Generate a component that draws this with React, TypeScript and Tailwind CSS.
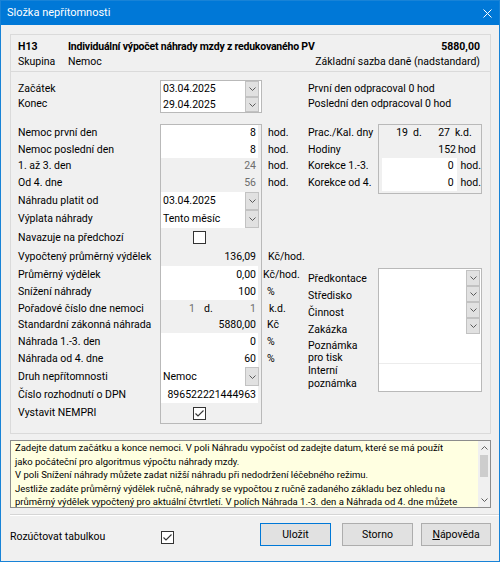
import React from "react";

function Chevron() {
  return (
    <svg width="7" height="4" viewBox="0 0 7 4" className="block">
      <path d="M0.5 0.5 L3.5 3.5 L6.5 0.5" fill="none" stroke="#5a5a5a" strokeWidth="1" />
    </svg>
  );
}

function DropBtn({ h }: { h: string }) {
  return (
    <div className={`w-[14px] ${h} shrink-0 flex items-center justify-center bg-[#e1e1e1] border border-[#c2c2c2]`}>
      <Chevron />
    </div>
  );
}

function Check({ on }: { on?: boolean }) {
  return (
    <div className="w-[13px] h-[13px] shrink-0 border border-[#333333] bg-white flex items-center justify-center">
      {on && (
        <svg width="11" height="11" viewBox="0 0 11 11" className="block">
          <path d="M1.5 5.5 L4 8 L9.5 2.5" fill="none" stroke="#333333" strokeWidth="1.1" />
        </svg>
      )}
    </div>
  );
}

function Num({ v, white, gray }: { v: string; white?: boolean; gray?: boolean }) {
  return (
    <div
      className={`h-full mr-[3px] flex items-center justify-end pr-[2px] ${white ? "bg-white" : ""} ${
        gray ? "text-[#6d6d6d]" : ""
      }`}
    >
      {v}
    </div>
  );
}

function Combo({ v }: { v: string }) {
  return (
    <div className="h-full mr-[2px] flex bg-white">
      <div className="flex-1 pl-[2px] flex items-center">{v}</div>
      <DropBtn h="h-full" />
    </div>
  );
}

const rows = [
  { l: "Nemoc první den", h: "h-[16px]", f: <Num v="8" white />, u: "hod.", up: "pl-[6px]" },
  { l: "Nemoc poslední den", h: "h-[17px]", f: <Num v="8" white />, u: "hod.", up: "pl-[6px]" },
  { l: "1. až 3. den", h: "h-[16px]", f: <Num v="24" gray />, u: "hod.", up: "pl-[6px]" },
  { l: "Od 4. dne", h: "h-[18px]", f: <Num v="56" gray />, u: "hod.", up: "pl-[6px]" },
  { l: "Náhradu platit od", h: "h-[18px]", f: <Combo v="03.04.2025" />, u: "", up: "" },
  { l: "Výplata náhrady", h: "h-[18px]", f: <Combo v="Tento měsíc" />, u: "", up: "" },
  {
    l: "Navazuje na předchozí",
    h: "h-[19px]",
    f: (
      <div className="h-full flex items-center pl-[32px]">
        <Check />
      </div>
    ),
    u: "",
    up: "",
  },
  { l: "Vypočtený průměrný výdělek", h: "h-[19px]", f: <Num v="136,09" />, u: "Kč/hod.", up: "pl-[6px]" },
  { l: "Průměrný výdělek", h: "h-[17px]", f: <Num v="0,00" white />, u: "Kč/hod.", up: "pl-[1px]" },
  { l: "Snížení náhrady", h: "h-[17px]", f: <Num v="100" white />, u: "%", up: "pl-[5px]" },
  {
    l: "Pořadové číslo dne nemoci",
    h: "h-[17px]",
    f: (
      <div className="h-full flex items-center">
        <span className="w-[34px] text-right text-[#6d6d6d]">1</span>
        <span className="pl-[9px]">d.</span>
        <span className="flex-1 text-right pr-[5px] text-[#6d6d6d]">1</span>
      </div>
    ),
    u: "k.d.",
    up: "pl-[7px]",
  },
  { l: "Standardní zákonná náhrada", h: "h-[16px]", f: <Num v="5880,00" />, u: "Kč", up: "pl-[5px]" },
  { l: "Náhrada 1.-3. den", h: "h-[17px]", f: <Num v="0" white />, u: "%", up: "pl-[5px]" },
  { l: "Náhrada od 4. dne", h: "h-[17px]", f: <Num v="60" white />, u: "%", up: "pl-[5px]" },
  { l: "Druh nepřítomnosti", h: "h-[19px]", f: <Combo v="Nemoc" />, u: "", up: "" },
  { l: "Číslo rozhodnutí o DPN", h: "h-[17px]", f: <Num v="896522221444963" white />, u: "", up: "" },
  {
    l: "Vystavit NEMPRI",
    h: "h-[20px]",
    f: (
      <div className="h-full flex items-center pl-[32px]">
        <Check on />
      </div>
    ),
    u: "",
    up: "",
  },
];

const help = [
  "Zadejte datum začátku a konce nemoci. V poli Náhradu vypočíst od zadejte datum, které se má použít",
  "jako počáteční pro algoritmus výpočtu náhrady mzdy.",
  "V poli Snížení náhrady můžete zadat nižší náhradu při nedodržení léčebného režimu.",
  "Jestliže zadáte průměrný výdělek ručně, náhrady se vypočtou z ručně zadaného základu bez ohledu na",
  "průměrný výdělek vypočtený pro aktuální čtvrtletí. V polích Náhrada 1.-3. den a Náhrada od 4. dne můžete",
];

export default function App() {
  return (
    <div className="w-[500px] h-[562px] flex flex-col bg-[#f0f0f0] border border-[#1883d7] text-[10.5px] text-black font-['Roboto',sans-serif] overflow-hidden">
      {/* title bar */}
      <div className="h-[24px] shrink-0 bg-[#0078d7] flex items-center justify-between pl-[6px] pr-[7px] text-white text-[11px]">
        <span>Složka nepřítomnosti</span>
        <svg width="9" height="9" viewBox="0 0 9 9" className="block">
          <path d="M0.5 0.5 L8.5 8.5 M8.5 0.5 L0.5 8.5" stroke="#ffffff" strokeWidth="1" />
        </svg>
      </div>

      <div className="flex flex-col pl-[9px] pr-[8px]">
        {/* header */}
        <div className="mt-[9px] h-[37px] border-x border-t border-[#dadada] pt-[4px] pl-[7px] pr-[10px]">
          <div className="flex h-[15px] items-center font-bold">
            <span className="w-[50px]">H13</span>
            <span className="flex-1 tracking-[-0.2px]">Individuální výpočet náhrady mzdy z redukovaného PV</span>
            <span>5880,00</span>
          </div>
          <div className="flex h-[15px] items-center">
            <span className="w-[50px]">Skupina</span>
            <span className="flex-1">Nemoc</span>
            <span>Základní sazba daně (nadstandard)</span>
          </div>
        </div>

        {/* main group */}
        <div className="h-[363px] border border-[#dadada] pt-[8px] pl-[7px]">
          {/* dates */}
          <div className="flex h-[33px]">
            <div className="w-[142px] pt-[1px]">
              <div className="h-[15px] flex items-center">Začátek</div>
              <div className="h-[15px] flex items-center">Konec</div>
            </div>
            <div className="w-[102px] h-[33px] border border-[#b9b9b9] bg-white flex flex-col">
              <div className="h-[16px] flex">
                <div className="flex-1 pl-[2px] flex items-center">03.04.2025</div>
                <div className="mr-[2px]">
                  <DropBtn h="h-[16px]" />
                </div>
              </div>
              <div className="h-[15px] flex">
                <div className="flex-1 pl-[2px] flex items-center">29.04.2025</div>
                <div className="mr-[2px]">
                  <DropBtn h="h-[15px]" />
                </div>
              </div>
            </div>
            <div className="w-[46px]" />
            <div className="pt-[1px]">
              <div className="h-[15px] flex items-center">První den odpracoval 0 hod</div>
              <div className="h-[15px] flex items-center">Poslední den odpracoval 0 hod</div>
            </div>
          </div>

          {/* big section */}
          <div className="flex mt-[11px]">
            <div className="w-[142px] pt-[1px]">
              {rows.map((r) => (
                <div key={r.l} className={`${r.h} flex items-center whitespace-nowrap`}>
                  {r.l}
                </div>
              ))}
            </div>
            <div className="w-[102px] h-[300px] border border-[#b9b9b9] bg-[#f0f0f0] flex flex-col">
              {rows.map((r) => (
                <div key={r.l} className={`${r.h} shrink-0`}>
                  {r.f}
                </div>
              ))}
            </div>
            <div className="w-[46px] pt-[1px]">
              {rows.map((r) => (
                <div key={r.l} className={`${r.h} flex items-center ${r.up}`}>
                  {r.u}
                </div>
              ))}
            </div>

            {/* right column */}
            <div className="w-[174px] flex flex-col">
              <div className="flex">
                <div className="w-[70px] pt-[1px]">
                  <div className="h-[16px] flex items-center">Prac./Kal. dny</div>
                  <div className="h-[17px] flex items-center">Hodiny</div>
                  <div className="h-[16px] flex items-center">Korekce 1.-3.</div>
                  <div className="h-[18px] flex items-center">Korekce od 4.</div>
                </div>
                <div className="w-[104px] h-[70px] border border-[#b9b9b9] flex flex-col">
                  <div className="h-[16px] flex items-center">
                    <span className="w-[29px] text-right">19</span>
                    <span className="w-[14px] pl-[5px]">d.</span>
                    <span className="w-[28px] text-right">27</span>
                    <span className="pl-[5px]">k.d.</span>
                  </div>
                  <div className="h-[17px] flex items-center">
                    <span className="w-[77px] text-right">152</span>
                    <span className="pl-[2px]">hod</span>
                  </div>
                  <div className="h-[16px] flex items-center">
                    <div className="ml-[3px] w-[75px] h-full bg-white flex items-center justify-end pr-[3px]">0</div>
                    <span className="pl-[4px]">hod.</span>
                  </div>
                  <div className="h-[17px] flex items-center">
                    <div className="ml-[3px] w-[75px] h-full bg-white flex items-center justify-end pr-[3px]">0</div>
                    <span className="pl-[4px]">hod.</span>
                  </div>
                </div>
              </div>

              <div className="flex mt-[74px]">
                <div className="w-[70px] pt-[2px]">
                  <div className="h-[17px] flex items-center">Předkontace</div>
                  <div className="h-[17px] flex items-center">Středisko</div>
                  <div className="h-[17px] flex items-center">Činnost</div>
                  <div className="h-[17px] flex items-center">Zakázka</div>
                  <div className="mt-[2px] leading-[12px]">
                    Poznámka
                    <br />
                    pro tisk
                  </div>
                  <div className="leading-[13px]">
                    Interní
                    <br />
                    poznámka
                  </div>
                </div>
                <div className="w-[104px] h-[124px] border border-[#b9b9b9] bg-white flex flex-col">
                  <div className="mt-[1px] flex flex-col items-end pr-[1px]">
                    <DropBtn h="h-[16px]" />
                    <DropBtn h="h-[16px]" />
                    <DropBtn h="h-[16px]" />
                    <DropBtn h="h-[16px]" />
                  </div>
                  <div className="h-[30px] border-b border-[#ececec]" />
                  <div className="flex-1" />
                </div>
              </div>
            </div>
          </div>
        </div>

        {/* help */}
        <div className="mt-[6px] h-[68px] border border-[#8c8c8c] bg-[#ffffe1] flex">
          <div className="flex-1 pl-[4px] text-[9.5px] leading-[13.5px] overflow-hidden whitespace-nowrap">
            {help.map((t) => (
              <div key={t}>{t}</div>
            ))}
          </div>
          <div className="w-[12px] bg-[#f0f0f0] flex flex-col items-center">
            <div className="h-[14px] flex items-center">
              <svg width="7" height="4" viewBox="0 0 7 4" className="block">
                <path d="M0.5 3.5 L3.5 0.5 L6.5 3.5" fill="none" stroke="#606060" strokeWidth="1" />
              </svg>
            </div>
            <div className="w-[8px] h-[22px] bg-[#cdcdcd]" />
            <div className="flex-1" />
            <div className="h-[14px] flex items-center">
              <Chevron />
            </div>
          </div>
        </div>

        {/* separator */}
        <div className="mt-[6px] -mr-[8px] h-[2px] border-t border-[#d5d5d5] border-b border-b-white" />

        {/* bottom row */}
        <div className="mt-[7px] h-[23px] flex items-center">
          <div className="mt-[5px] flex items-center">
            <span className="w-[151px]">Rozúčtovat tabulkou</span>
            <Check on />
          </div>
          <div className="ml-auto flex">
            <div className="w-[71px] h-[23px] border border-[#0078d7] bg-[#e1e1e1] flex items-center justify-center">
              Uložit
            </div>
            <div className="ml-[11px] w-[71px] h-[23px] border border-[#adadad] bg-[#e1e1e1] flex items-center justify-center">
              Storno
            </div>
            <div className="ml-[8px] w-[70px] h-[23px] border border-[#adadad] bg-[#e1e1e1] flex items-center justify-center">
              <span className="underline">N</span>ápověda
            </div>
          </div>
        </div>
      </div>
    </div>
  );
}
